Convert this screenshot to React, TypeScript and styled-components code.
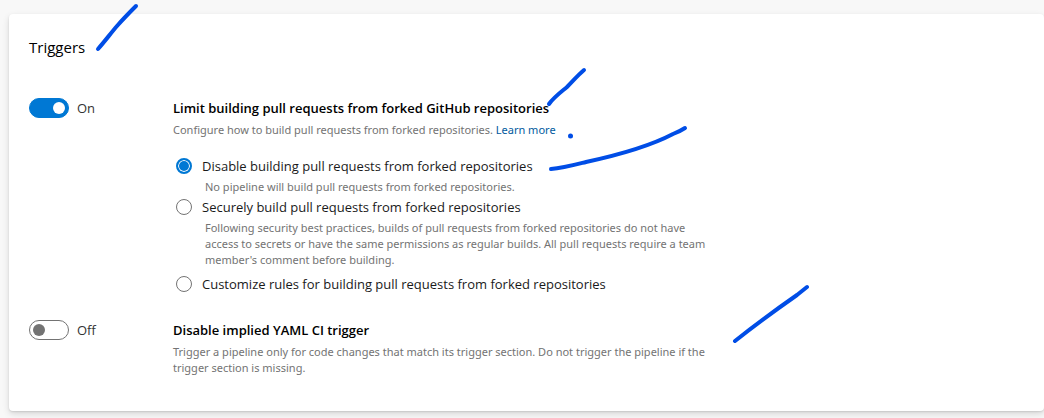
import React, { useId, useState } from "react";
import styled, { createGlobalStyle } from "styled-components";

const ACCENT = "#0078d4";
const MUTED = "#737373";
const CARD_SHADOW =
  "0 3px 7px rgba(0, 0, 0, 0.13), 0 1px 2px rgba(0, 0, 0, 0.11)";

const GlobalStyle = createGlobalStyle`
  *, *::before, *::after { box-sizing: border-box; }
  body {
    margin: 0;
    background: #f8f8f8;
    color: #1a1a1a;
    font: 13px/20px "Segoe UI", "Open Sans", "Noto Sans", sans-serif;
    overflow-x: hidden;
  }
  h2, h3, p { margin: 0; }
`;

const Page = styled.main`
  position: relative;
  display: flex;
  flex-direction: column;
  gap: 14px;
  padding: 0 0 7px 9px;
`;

const PreviousCard = styled.div`
  box-shadow: ${CARD_SHADOW};
`;

const Card = styled.section`
  padding: 22px 20px 35px;
  border-radius: 4px;
  background: #fff;
  box-shadow: ${CARD_SHADOW};
`;

const CardTitle = styled.h2`
  margin-bottom: 40px;
  color: #000;
  font-size: 15px;
  font-weight: 500;
  line-height: 22px;
`;

const SettingList = styled.div`
  display: grid;
  gap: 24px;
`;

const Setting = styled.div`
  display: grid;
  grid-template-columns: 120px minmax(0, 548px);
  column-gap: 24px;
  align-items: start;
`;

const ToggleRow = styled.div`
  display: flex;
  align-items: center;
  gap: 8px;
`;

const Track = styled.button<{ $on: boolean }>`
  display: flex;
  align-items: center;
  justify-content: ${(p) => (p.$on ? "flex-end" : "flex-start")};
  width: 40px;
  height: 20px;
  padding: 0 3px;
  border: 1px solid ${(p) => (p.$on ? ACCENT : MUTED)};
  border-radius: 10px;
  background: ${(p) => (p.$on ? ACCENT : "#fff")};
  cursor: pointer;
`;

const Knob = styled.span<{ $on: boolean }>`
  width: 12px;
  height: 12px;
  border-radius: 50%;
  background: ${(p) => (p.$on ? "#fff" : MUTED)};
`;

const ToggleText = styled.span`
  color: #333;
`;

const SettingTitle = styled.h3`
  color: #000;
  font-size: 13px;
  font-weight: 600;
  line-height: 20px;
`;

const SmallText = styled.p`
  color: ${MUTED};
  font-family: "Segoe UI", "Noto Sans", "Open Sans", sans-serif;
  font-size: 11px;
  line-height: 16px;
`;

const Description = styled(SmallText)`
  padding-top: 4px;
`;

const Link = styled.a`
  color: #005a9e;
  text-decoration: none;
`;

const Choices = styled.div`
  display: grid;
  padding: 16px 8px 0 3px;
`;

const Choice = styled.div<{ $spaced?: boolean }>`
  padding-bottom: ${(p) => (p.$spaced ? 4 : 0)}px;
`;

const ChoiceLabel = styled.label`
  display: flex;
  align-items: center;
  gap: 10px;
  height: 24px;
  cursor: pointer;
`;

const Radio = styled.input`
  appearance: none;
  flex: none;
  width: 16px;
  height: 16px;
  margin: 0;
  border: 1px solid ${MUTED};
  border-radius: 50%;
  background: #fff;
  cursor: pointer;

  &:checked {
    border: 2px solid ${ACCENT};
    background: ${ACCENT};
    box-shadow: inset 0 0 0 1px #fff;
  }
`;

const ChoiceHelp = styled(SmallText)`
  padding: 1px 0 0 29px;
`;

const Ink = styled.svg`
  position: absolute;
  top: 0;
  left: 0;
  pointer-events: none;
`;

function Toggle({ labelledBy, initial }: { labelledBy: string; initial: boolean }) {
  const [on, setOn] = useState(initial);
  return (
    <ToggleRow>
      <Track
        type="button"
        role="switch"
        aria-checked={on}
        aria-labelledby={labelledBy}
        $on={on}
        onClick={() => setOn(!on)}
      >
        <Knob $on={on} />
      </Track>
      <ToggleText>{on ? "On" : "Off"}</ToggleText>
    </ToggleRow>
  );
}

const choices = [
  {
    value: "disable",
    label: "Disable building pull requests from forked repositories",
    help: "No pipeline will build pull requests from forked repositories.",
    spaced: false,
  },
  {
    value: "secure",
    label: "Securely build pull requests from forked repositories",
    help: "Following security best practices, builds of pull requests from forked repositories do not have access to secrets or have the same permissions as regular builds. All pull requests require a team member's comment before building.",
    spaced: true,
  },
  {
    value: "custom",
    label: "Customize rules for building pull requests from forked repositories",
    help: "",
    spaced: false,
  },
];

export default function App() {
  const forkId = useId();
  const yamlId = useId();
  const [choice, setChoice] = useState("disable");

  return (
    <>
      <GlobalStyle />
      <Page>
        <PreviousCard />
        <Card>
          <CardTitle>Triggers</CardTitle>
          <SettingList>
            <Setting>
              <Toggle labelledBy={forkId} initial />
              <div>
                <SettingTitle id={forkId}>
                  Limit building pull requests from forked GitHub repositories
                </SettingTitle>
                <Description>
                  Configure how to build pull requests from forked repositories.{" "}
                  <Link href="#learn-more">Learn more</Link>
                </Description>
                <Choices role="radiogroup" aria-labelledby={forkId}>
                  {choices.map((c) => (
                    <Choice key={c.value} $spaced={c.spaced}>
                      <ChoiceLabel>
                        <Radio
                          type="radio"
                          name="fork-builds"
                          value={c.value}
                          checked={choice === c.value}
                          onChange={() => setChoice(c.value)}
                        />
                        {c.label}
                      </ChoiceLabel>
                      {c.help && <ChoiceHelp>{c.help}</ChoiceHelp>}
                    </Choice>
                  ))}
                </Choices>
              </div>
            </Setting>
            <Setting>
              <Toggle labelledBy={yamlId} initial={false} />
              <div>
                <SettingTitle id={yamlId}>Disable implied YAML CI trigger</SettingTitle>
                <Description>
                  Trigger a pipeline only for code changes that match its trigger
                  section. Do not trigger the pipeline if the trigger section is
                  missing.
                </Description>
              </div>
            </Setting>
          </SettingList>
        </Card>
        <Ink
          width="820"
          height="360"
          viewBox="0 0 820 360"
          fill="none"
          stroke="#004de6"
          strokeWidth="4"
          strokeLinecap="round"
          strokeLinejoin="round"
          aria-hidden="true"
        >
          <path d="M98 49C105 41 111 33 117 26C124 18 130 12 136 6" />
          <path d="M549 104C554 97 561 92 567 87C573 81 578 75 584 70" />
          <path d="M551 169C563 168 574 165 586 162C623 154 652 145 673 134C678 132 682 130 685 128" />
          <path d="M735 341C755 325 777 309 797 295L807 287" />
          <circle cx="570.5" cy="136" r="2.5" fill="#004de6" stroke="none" />
        </Ink>
      </Page>
    </>
  );
}
